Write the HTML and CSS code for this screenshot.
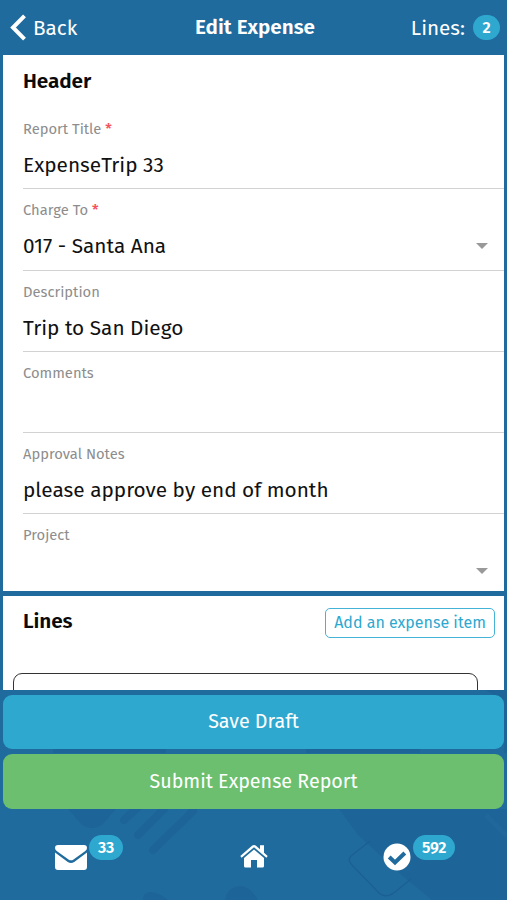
FILE: index.html
```html
<!DOCTYPE html>
<html lang="en">
<head>
<meta charset="utf-8">
<title>Edit Expense</title>
<link rel="stylesheet" href="styles.css">
</head>
<body>
<div class="app">
  <svg class="backdrop" width="507" height="215" viewBox="0 685 507 215" aria-hidden="true">
    <g fill="#1d6498">
      <path d="M68 809H116L103 824Q92 832 81 824Z"/>
      <path d="M339 809H507V900H432L405 878L358 835Z"/>
      <path d="M225 900Q227 887 240 886Q250 886 258 900Z"/>
      <path d="M143 900Q143 892 151 892Q160 893 168 900Z"/>
      <path d="M53 749H166V753H53ZM306 749H420V753H306ZM485 690H507V753H504V700Z"/>
    </g>
    <g stroke="#1d6498" stroke-width="8" stroke-linecap="round">
      <path d="M124 820L138 807M138 835L164 809M153 850L193 811"/>
    </g>
    <path d="M370 841L351 856Q347 860 352 865L379 893Q386 899 395 892L411 879" fill="none" stroke="#1b6094" stroke-width="1.3"/>
    <path d="M486 815L507 836" stroke="#20689b" stroke-width="5"/>
  </svg>

  <header class="topbar">
    <a class="back">
      <svg width="16" height="27" viewBox="0 0 16 27"><path d="M14.5 1.8L3 13.5L14.5 25.2" fill="none" stroke="#fff" stroke-width="4"/></svg>
      <span>Back</span>
    </a>
    <h1 class="title">Edit Expense</h1>
    <div class="count"><span>Lines:</span><span class="badge badge-small">2</span></div>
  </header>

  <main class="content">
    <section class="panel header-panel">
      <h2 class="heading">Header</h2>
      <div class="field"><label class="label">Report Title <b class="req">*</b></label><div class="value">ExpenseTrip 33</div></div>
      <div class="field"><label class="label">Charge To <b class="req">*</b></label><div class="value">017 - Santa Ana</div><i class="caret"></i></div>
      <div class="field"><label class="label">Description</label><div class="value">Trip to San Diego</div></div>
      <div class="field"><label class="label">Comments</label><div class="value"></div></div>
      <div class="field"><label class="label">Approval Notes</label><div class="value">please approve by end of month</div></div>
      <div class="field last"><label class="label">Project</label><div class="value"></div><i class="caret"></i></div>
    </section>
    <section class="panel lines-panel">
      <div class="lines-head">
        <h2 class="heading">Lines</h2>
        <button class="add">Add an expense item</button>
      </div>
      <div class="line-card"></div>
    </section>
  </main>

  <div class="actions">
    <button class="action save">Save Draft</button>
    <button class="action submit">Submit Expense Report</button>
  </div>

  <nav class="tabs">
    <a class="tab mail">
      <svg width="32" height="25" viewBox="0 0 32 25" fill="#fff"><path d="M3 0H29Q32 0 32 3Q32 5 30 6.2L18.5 14.5Q16 16.2 13.5 14.5L2 6.2Q0 5 0 3Q0 0 3 0Z"/><path d="M0 7.5L12.8 17Q16 19.2 19.2 17L32 7.5V22Q32 25 29 25H3Q0 25 0 22Z"/></svg>
      <span class="badge">33</span>
    </a>
    <a class="tab home">
      <svg width="28" height="24" viewBox="0 0 28 24" fill="#fff"><path d="M14 5.6L24 14V22Q24 23.5 22.5 23.5H17V16H11V23.5H5.5Q4 23.5 4 22V14Z"/><path d="M.3 12.1L12.3 1.6Q14 .2 15.7 1.6L20 5.3V1.2H24V8.8L27.7 12.1L26.4 13.7L14 3.2L1.6 13.7Z"/></svg>
    </a>
    <a class="tab done">
      <svg width="28" height="28" viewBox="0 0 28 28"><circle cx="14" cy="14" r="13.5" fill="#fff"/><path d="M6.2 14L12 19.5L21.8 10" fill="none" stroke="#206b9e" stroke-width="4"/></svg>
      <span class="badge">592</span>
    </a>
  </nav>
</div>
</body>
</html>
```
FILE: styles.css
```css
* { box-sizing: border-box; }
body { margin: 0; font-family: "Fira Sans", "Noto Sans", sans-serif; }
h1, h2 { margin: 0; font-weight: 600; }
button { font: inherit; padding: 0; border: 0; }

.app {
  position: relative;
  width: 507px;
  height: 900px;
  overflow: hidden;
  background: #206b9e;
  display: flex;
  flex-direction: column;
}
.backdrop { position: absolute; left: 0; bottom: 0; }

.topbar {
  height: 54px;
  flex: none;
  display: grid;
  grid-template-columns: 1fr auto 1fr;
  align-items: center;
  padding: 1px 7px 0 10px;
  color: #fff;
  font-size: 20.7px;
}
.back { display: flex; align-items: center; gap: 7px; }
.title { font-size: 20.7px; padding-bottom: 2px; }
.count { display: flex; justify-content: flex-end; align-items: center; gap: 8px; }

.badge {
  height: 25px;
  padding: 0 9px;
  border-radius: 13px;
  background: #2ea8cf;
  color: #fff;
  font-size: 16px;
  font-weight: 600;
  line-height: 26px;
  letter-spacing: -0.2px;
}
.badge-small { width: 27px; padding: 0; text-align: center; letter-spacing: 0; }

.content {
  position: relative;
  height: 636px;
  flex: none;
  overflow: hidden;
  padding: 0 3px;
}
.panel { background: #fff; overflow: hidden; }
.header-panel { height: 536px; padding: 13px 0 0 20px; margin: 1px 0 5px; }
.heading { font-size: 20.8px; line-height: 28px; height: 28px; letter-spacing: -0.1px; color: #0a0a0a; }
.header-panel .heading { margin-bottom: 12px; }
.field {
  position: relative;
  height: 81.3px;
  padding-top: 11px;
  border-bottom: 1.5px solid #d2d2d2;
}
.last { border-bottom-color: #e1edf5; }
.label { display: block; height: 20px; font-size: 14.75px; line-height: 20px; color: #8d8d8d; white-space: nowrap; }
.req { color: #f5535b; font-weight: 500; }
.value { margin-top: 14px; font-size: 20.8px; line-height: 26px; color: #111; white-space: nowrap; }
.caret {
  position: absolute;
  right: 16px;
  top: 54px;
  border: 6px solid transparent;
  border-top-color: #999;
  border-bottom: 0;
}

.lines-panel { height: 94px; padding: 12px 9px 0 10px; }
.lines-head { display: flex; justify-content: space-between; padding-left: 10px; }
.add {
  width: 170px;
  height: 30px;
  border: 1.5px solid #45b3d5;
  border-radius: 5px;
  background: #fff;
  color: #2ea8cf;
  font-size: 16px;
  line-height: 26px;
  white-space: nowrap;
}
.line-card {
  width: 465px;
  height: 60px;
  margin-top: 35px;
  border: 1.5px solid #333;
  border-radius: 9px;
}

.actions { position: relative; padding: 5px 3px 0; display: grid; gap: 5px; }
.action { height: 54px; border-radius: 9px; color: #fff; font-size: 19.7px; padding-bottom: 1px; }
.save { background: #2ea8cf; }
.submit { height: 55px; background: #6bbf6e; }

.tabs {
  position: relative;
  flex: 1;
  display: grid;
  grid-template-columns: 1fr 1fr 1fr;
  padding-top: 26px;
}
.tab { display: flex; align-items: flex-start; }
.tab svg { display: block; }
.mail { padding-left: 55px; gap: 2px; }
.mail svg { margin-top: 10px; }
.home { justify-content: center; }
.home svg { margin-top: 9px; }
.done { padding-left: 45px; gap: 2px; }
.done svg { margin-top: 8px; }
```
